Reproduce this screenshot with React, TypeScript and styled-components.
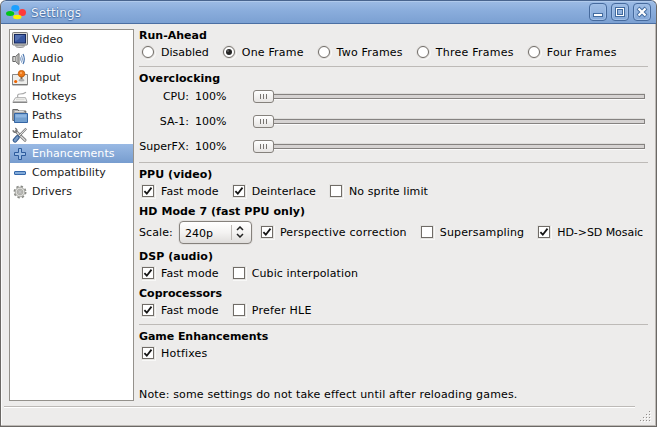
import React from "react";
import styled, { createGlobalStyle, css } from "styled-components";

const Global = createGlobalStyle`
  * { box-sizing: border-box; }
  html, body { margin: 0; padding: 0; background: #fff; }
  body { font: 11px/14px "DejaVu Sans", sans-serif; color: #000; overflow: hidden; }
`;

const Frame = styled.div`
  width: 657px;
  height: 427px;
  display: flex;
  flex-direction: column;
  background: #edeceb;
  border: 1px solid #6b6865;
  border-top: 0;
  border-radius: 6px 6px 0 0;
  box-shadow: inset -1px -1px 0 #bebab6, inset 1px 0 0 #fbfbfb;
  overflow: hidden;
`;

const TitleBar = styled.header`
  height: 24px;
  flex: none;
  display: flex;
  align-items: center;
  margin: 0 -1px;
  padding: 0 1px 0 5px;
  border: 1px solid #49658f;
  border-bottom-color: #4b6fa3;
  border-radius: 6px 6px 0 0;
  background: linear-gradient(#9dbce5, #8aaddc 45%, #7ba0d2);
  box-shadow: inset 0 1px 0 #b0caec;
`;

const Title = styled.h1`
  flex: 1;
  margin: 1px 0 0 5px;
  font-size: 12px;
  line-height: 16px;
  font-weight: 400;
  letter-spacing: 0.1px;
  color: #eef4fc;
  text-shadow: 0 0 1px #3d639b, 0 0 2px #4f76ad, 0 1px 1px #4f76ad;
`;

const TitleButton = styled.span`
  width: 18px;
  height: 18px;
  margin: 0 4px 1px 0;
  display: flex;
  align-items: center;
  justify-content: center;
  border: 1px solid #466a9d;
  border-radius: 4px;
  background: linear-gradient(#9fbde5, #84a8d8);
  box-shadow: inset 0 0 0 1px #a0bfe7;
  svg { display: block; }
`;

const Body = styled.div`
  flex: none;
  height: 377px;
  display: flex;
  padding: 5px 8px 0 8px;
`;

const Sidebar = styled.nav`
  width: 125px;
  height: 372px;
  flex: none;
  background: #fff;
  border: 1px solid #94918c;
`;

const NavItem = styled.div<{ $active?: boolean }>`
  height: 19px;
  display: flex;
  align-items: center;
  gap: 4px;
  padding-left: 2px;
  letter-spacing: 0.05px;
  color: #1a1a1a;
  svg { display: block; flex: none; }
  ${(p) => p.$active && css`
    color: #fff;
    background: linear-gradient(#99b9e4, #779dcf);
  `}
`;

const Panel = styled.main`
  width: 510px;
  margin-left: 5px;
  display: flex;
  flex-direction: column;
`;

const Heading = styled.h2<{ $top?: number; $track?: number }>`
  margin: ${(p) => p.$top ?? 0}px 0 0;
  height: 14px;
  flex: none;
  font-size: 11px;
  line-height: 14px;
  font-weight: 700;
  letter-spacing: ${(p) => p.$track ?? 0.05}px;
`;

const Row = styled.div<{ $tall?: boolean }>`
  height: ${(p) => (p.$tall ? 28 : 20)}px;
  margin-top: -1px;
  flex: none;
  display: flex;
  align-items: center;
  gap: 14px;
  padding-left: ${(p) => (p.$tall ? 0 : 3)}px;
  white-space: nowrap;
`;

const Rule = styled.hr<{ $top: number }>`
  margin: ${(p) => p.$top}px 0 0;
  height: 1px;
  flex: none;
  border: 0;
  background: #bdbab7;
`;

const Option = styled.label`
  display: flex;
  align-items: center;
  gap: 7px;
`;

const Label = styled.span<{ $track?: number }>`
  padding-top: 2px;
  letter-spacing: ${(p) => p.$track ?? 0}px;
`;

const Box = styled.span<{ $round?: boolean }>`
  width: 12px;
  height: 12px;
  flex: none;
  display: flex;
  align-items: center;
  justify-content: center;
  background: #fff;
  border: 1px solid #706c67;
  border-radius: ${(p) => (p.$round ? "50%" : "0")};
  box-shadow: 0 0 0 1px ${(p) => (p.$round ? "#e1dfdd" : "#e4e3e1")}, 1px 1px 0 1px #f8f8f7;
  svg { flex: none; display: block; }
`;

const Sliders = styled.div`
  margin-top: -2px;
  flex: none;
`;

const SliderRow = styled.div`
  height: 25px;
  display: grid;
  grid-template-columns: 50px 44px 400px;
  column-gap: 6px;
  align-items: center;
  justify-content: start;
  span:first-child { text-align: right; }
`;

const Track = styled.div`
  height: 5px;
  margin-left: 8px;
  display: flex;
  align-items: center;
  border: 1px solid #858280;
  background: #d6d3d2;
  box-shadow: 0 1px 0 #fbfbfb, 0 -1px 0 #dedddb;
`;

const Thumb = styled.div`
  width: 21px;
  height: 13px;
  margin-left: -1px;
  flex: none;
  display: flex;
  align-items: center;
  justify-content: center;
  gap: 2px;
  border: 1px solid #85817c;
  border-radius: 3px;
  background: linear-gradient(#fff, #e6e4e2);
  i { width: 1px; height: 5px; background: #777470; }
`;

const Combo = styled.div`
  width: 73px;
  height: 23px;
  margin: 1px -5px 0 -8px;
  display: flex;
  align-items: center;
  padding: 3px 7px 0 5px;
  border: 1px solid #85817c;
  border-radius: 4px;
  background: linear-gradient(#fff, #f4f3f2 50%, #dfdddb);
  box-shadow: 0 0 0 1px #e3e1df;
  span { flex: 1; }
  i { width: 1px; height: 15px; margin: -3px 4px 0 0; background: #bcb8b4; }
  svg { display: block; margin-top: -4px; }
`;

const Note = styled.p`
  margin: 25px 0 0;
  height: 14px;
  letter-spacing: 0.155px;
  white-space: nowrap;
`;

const StatusBar = styled.footer`
  flex: 1;
  display: flex;
  justify-content: space-between;
  padding: 4px 5px 4px 3px;
`;

const StatusLine = styled.div`
  width: 631px;
  height: 2px;
  margin-top: 1px;
  background: linear-gradient(#bdbab7 50%, #fff 50%);
`;

const Grip = styled.svg`
  display: block;
  align-self: flex-end;
`;

const Check = () => (
  <svg width="10" height="10" viewBox="0 0 10 10">
    <path d="M1.4 5.2 3.8 7.7 8.5 1.6" fill="none" stroke="#151515" strokeWidth="1.8" />
  </svg>
);

type OptionProps = { label: string; on?: boolean; track?: number };

const CheckOption = ({ label, on, track }: OptionProps) => (
  <Option><Box>{on && <Check />}</Box><Label $track={track}>{label}</Label></Option>
);

const RadioOption = ({ label, on, track }: OptionProps) => (
  <Option>
    <Box $round>
      {on && <svg width="8" height="8" viewBox="0 0 8 8"><circle cx="4" cy="4" r="3" fill="#252525" /><circle cx="3" cy="3" r=".8" fill="#888" /></svg>}
    </Box>
    <Label $track={track}>{label}</Label>
  </Option>
);

const Slider = ({ label }: { label: string }) => (
  <SliderRow>
    <span>{label}</span>
    <span>100%</span>
    <Track><Thumb><i /><i /><i /></Thumb></Track>
  </SliderRow>
);

const Logo = () => (
  <svg width="20" height="16" viewBox="0 0 20 16">
    <ellipse cx="9.3" cy="4.2" rx="4" ry="3.2" fill="#1ca0ff" />
    <ellipse cx="16.3" cy="8.6" rx="3.7" ry="3.5" fill="#ff3b3b" />
    <ellipse cx="4.1" cy="9.4" rx="4.1" ry="2.5" fill="#00c516" />
    <ellipse cx="11.3" cy="13" rx="4.2" ry="2.2" fill="#fff000" />
  </svg>
);

const icons: Record<string, React.ReactNode> = {
  Video: <>
    <ellipse cx="8" cy="14" rx="4.5" ry="1.4" fill="#ddd" stroke="#888" />
    <rect x=".5" y=".5" width="15" height="12.5" rx="1" fill="#d8d8d4" stroke="#777" />
    <rect x="2.5" y="2.5" width="11" height="8.5" fill="#3857a0" stroke="#17295f" />
    <path d="M3 9.5V3h9.5Q8 4 7 7 5 8 3 9.5" fill="#5470b0" />
  </>,
  Audio: <>
    <path d="M.8 5.5v5h2.7l3.5 3V2.5l-3.5 3z" fill="#d5d5d2" stroke="#666" />
    <path d="M3.5 5.5v5M5.2 4.5v7" stroke="#888" strokeWidth=".8" />
    <path d="M8.3 6.3q1 1.7 0 3.4" fill="none" stroke="#8aa4c8" />
    <path d="M9.5 4.5q1.8 3.5 0 7" fill="none" stroke="#6f91bf" />
    <path d="M11 3q2.6 5 0 10" fill="none" stroke="#4b76ae" strokeWidth="1.2" />
  </>,
  Input: <>
    <path d="M.5 4.5h15v10.5H.5z" fill="#eeeeec" stroke="#888" />
    <path d="M1 14.5h14" stroke="#777" />
    <path d="M9.5 6v4" stroke="#7a6755" strokeWidth="2" />
    <ellipse cx="9.5" cy="10.3" rx="3" ry="1.2" fill="#aaa" />
    <circle cx="9.5" cy="3.7" r="3.3" fill="#ee7a1a" stroke="#b95700" strokeWidth=".8" />
    <circle cx="9" cy="3" r="1" fill="#ffb470" />
    <circle cx="3.7" cy="11.5" r="1.6" fill="#ef6500" />
  </>,
  Hotkeys: <>
    <path d="M6 8.8Q4.5 5 8 5t6-1.8" fill="none" stroke="#aaa" strokeWidth="1.2" />
    <path d="M3.5 8.7h10l1.5 4H1z" fill="#f5f5f3" stroke="#aaa" />
    <path d="M.7 13.5h14.5" stroke="#888" strokeWidth="1.2" />
    <path d="M4 10.7h8.5" stroke="#d5d5d2" />
  </>,
  Paths: <>
    <path d="M.8 12.5v-11h5l1 1.5h7v9.5z" fill="#aaa" stroke="#666" />
    <path d="M2.8 3.5h9" stroke="#ddd" />
    <path d="M2.5 5.5h13v9h-13z" fill="#729fcf" stroke="#3465a4" />
    <path d="M3.5 6.5h11v3h-11z" fill="#8eb6e2" />
  </>,
  Emulator: <>
    <path d="M4 4.5 13 13.2" stroke="#777" strokeWidth="3" strokeLinecap="round" />
    <path d="M4 4.5 13 13.2" stroke="#ddd" strokeWidth="1.3" strokeLinecap="round" />
    <path d="M.9 3.2q1 3 3.4 1.8Q5.7 2.8 3.3 1" fill="none" stroke="#777" strokeWidth="1.5" />
    <path d="M14.2 1.5 7 9" stroke="#777" strokeWidth="2.3" />
    <path d="M14.2 1.5 7 9" stroke="#eee" />
    <path d="M5.4 10.5 3 13.3" stroke="#31588c" strokeWidth="4.6" strokeLinecap="round" />
    <path d="M5.4 10.5 3 13.3" stroke="#7699c4" strokeWidth="2.6" strokeLinecap="round" />
  </>,
  Enhancements: <path d="M6.5 2.5h3v4h4v3h-4v4h-3v-4h-4v-3h4z" fill="#9bbde5" stroke="#2c5b9c" strokeLinejoin="round" />,
  Compatibility: <rect x="2.5" y="6.5" width="11" height="3" rx=".5" fill="#83abd9" stroke="#3467aa" />,
  Drivers: <>
    <circle cx="8" cy="8" r="5.6" fill="none" stroke="#888a85" strokeWidth="1.8" strokeDasharray="2.3 2.1" />
    <circle cx="8" cy="8" r="4.8" fill="#dededa" stroke="#9b9b96" strokeWidth=".8" />
    <circle cx="8" cy="8" r="2.8" fill="#c8c8c4" stroke="#a1a19d" strokeWidth=".8" />
    <circle cx="8" cy="8" r="1.2" fill="#fff" stroke="#888" strokeWidth=".7" />
  </>,
};

export default function App() {
  return (
    <>
      <Global />
      <Frame>
        <TitleBar>
          <Logo />
          <Title>Settings</Title>
          <TitleButton><svg width="12" height="12"><rect x="1.5" y="7.5" width="9" height="3" fill="#fff" stroke="#426b9f" /></svg></TitleButton>
          <TitleButton><svg width="12" height="12"><rect x="2.5" y="2.5" width="7" height="7" fill="none" stroke="#426b9f" strokeWidth="3" /><rect x="2.5" y="2.5" width="7" height="7" fill="none" stroke="#fff" /></svg></TitleButton>
          <TitleButton><svg width="12" height="12"><path d="m2 2 8 8m0-8-8 8" stroke="#426b9f" strokeWidth="4" /><path d="m2.5 2.5 7 7m0-7-7 7" stroke="#fff" strokeWidth="2.2" /></svg></TitleButton>
        </TitleBar>
        <Body>
          <Sidebar>
            {Object.keys(icons).map((name) => (
              <NavItem key={name} $active={name === "Enhancements"}>
                <svg width="16" height="16" viewBox="0 0 16 16">{icons[name]}</svg>
                {name}
              </NavItem>
            ))}
          </Sidebar>
          <Panel>
            <Heading $track={0}>Run-Ahead</Heading>
            <Row>
              <RadioOption label="Disabled" />
              <RadioOption label="One Frame" on track={0.18} />
              <RadioOption label="Two Frames" track={0.2} />
              <RadioOption label="Three Frames" track={0.25} />
              <RadioOption label="Four Frames" track={0.2} />
            </Row>
            <Rule $top={4} />
            <Heading $top={5}>Overclocking</Heading>
            <Sliders>
              <Slider label="CPU:" />
              <Slider label="SA-1:" />
              <Slider label="SuperFX:" />
            </Sliders>
            <Rule $top={3} />
            <Heading $top={5}>PPU (video)</Heading>
            <Row>
              <CheckOption label="Fast mode" on track={0.1} />
              <CheckOption label="Deinterlace" on track={0.07} />
              <CheckOption label="No sprite limit" track={0.1} />
            </Row>
            <Heading $top={4} $track={0.07}>HD Mode 7 (fast PPU only)</Heading>
            <Row $tall>
              <Label $track={0.1}>Scale:</Label>
              <Combo>
                <span>240p</span><i />
                <svg width="8" height="12" viewBox="0 0 8 12"><path d="m1 4 3-3 3 3M1 8l3 3 3-3" fill="none" stroke="#222" strokeWidth="1.5" /></svg>
              </Combo>
              <CheckOption label="Perspective correction" on track={0.2} />
              <CheckOption label="Supersampling" track={0.15} />
              <CheckOption label="HD->SD Mosaic" on track={-0.06} />
            </Row>
            <Heading $top={4}>DSP (audio)</Heading>
            <Row>
              <CheckOption label="Fast mode" on track={0.1} />
              <CheckOption label="Cubic interpolation" track={0.1} />
            </Row>
            <Heading $top={4} $track={0}>Coprocessors</Heading>
            <Row>
              <CheckOption label="Fast mode" on track={0.1} />
              <CheckOption label="Prefer HLE" track={0.25} />
            </Row>
            <Rule $top={4} />
            <Heading $top={5} $track={-0.06}>Game Enhancements</Heading>
            <Row>
              <CheckOption label="Hotfixes" on track={0.2} />
            </Row>
            <Note>Note: some settings do not take effect until after reloading games.</Note>
          </Panel>
        </Body>
        <StatusBar>
          <StatusLine />
          <Grip width="11" height="11" fill="#918e8b">
            {[[9, 0], [6, 3], [9, 3], [3, 6], [6, 6], [9, 6], [0, 9], [3, 9], [6, 9], [9, 9]].map(([x, y]) => (
              <g key={`${x}-${y}`}>
                <rect x={x + 1} y={y + 1} width="1" height="1" fill="#fff" />
                <rect x={x} y={y} width="1" height="1" />
              </g>
            ))}
          </Grip>
        </StatusBar>
      </Frame>
    </>
  );
}
